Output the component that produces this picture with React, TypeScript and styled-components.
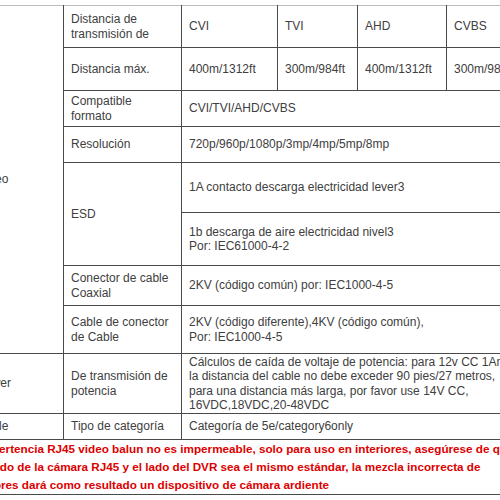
import styled, { createGlobalStyle } from "styled-components"

const GlobalStyle = createGlobalStyle`
    html, body {
        margin: 0;
        padding: 0;
        background: #fff;
    }
    body {
        font-family: "Liberation Sans", Arial, sans-serif;
    }
`

const Page = styled.div`
    width: 500px;
    height: 500px;
    overflow: hidden;
    padding-top: 5px;
    box-sizing: border-box;
`

const SpecTable = styled.table`
    margin-left: -30px;
    width: 560px;
    table-layout: fixed;
    border-collapse: collapse;
    font-size: 12px;
    line-height: 14.4px;
    color: #404040;

    tr:first-child td {
        border-top-color: #bbb;
    }
`

const Col = styled.col<{ $w: number }>`
    width: ${({ $w }) => $w}px;
`

const Row = styled.tr<{ $h: number }>`
    height: ${({ $h }) => $h}px;
`

const Cell = styled.td`
    border: 1px solid #4a4a4a;
    padding: 0 7px;
    vertical-align: middle;
    white-space: nowrap;
    overflow: hidden;
`

const GroupCell = styled(Cell)`
    padding-left: 6px;
`

const Warning = styled.td`
    border: 1px solid #4a4a4a;
    padding: 0 6px;
    color: #dd0000;
    font-size: 11.7px;
    font-weight: bold;
    line-height: 18px;
    white-space: nowrap;
    vertical-align: middle;
`

const widths = [93, 118, 96, 80, 89, 84]

export default function App() {
    return (
        <>
            <GlobalStyle />
            <Page>
                <SpecTable>
                    <colgroup>
                        {widths.map((w, i) => <Col key={i} $w={w} />)}
                    </colgroup>
                    <tbody>
                        <Row $h={42}>
                            <GroupCell rowSpan={8}>Vídeo</GroupCell>
                            <Cell>Distancia de<br />transmisión de</Cell>
                            <Cell>CVI</Cell>
                            <Cell>TVI</Cell>
                            <Cell>AHD</Cell>
                            <Cell>CVBS</Cell>
                        </Row>
                        <Row $h={43}>
                            <Cell>Distancia máx.</Cell>
                            <Cell>400m/1312ft</Cell>
                            <Cell>300m/984ft</Cell>
                            <Cell>400m/1312ft</Cell>
                            <Cell>300m/984ft</Cell>
                        </Row>
                        <Row $h={36}>
                            <Cell>Compatible<br />formato</Cell>
                            <Cell colSpan={4}>CVI/TVI/AHD/CVBS</Cell>
                        </Row>
                        <Row $h={36}>
                            <Cell>Resolución</Cell>
                            <Cell colSpan={4}>720p/960p/1080p/3mp/4mp/5mp/8mp</Cell>
                        </Row>
                        <Row $h={50}>
                            <Cell rowSpan={2}>ESD</Cell>
                            <Cell colSpan={4}>1A contacto descarga electricidad lever3</Cell>
                        </Row>
                        <Row $h={53}>
                            <Cell colSpan={4}>1b descarga de aire electricidad nivel3<br />Por: IEC61000-4-2</Cell>
                        </Row>
                        <Row $h={40}>
                            <Cell>Conector de cable<br />Coaxial</Cell>
                            <Cell colSpan={4}>2KV (código común) por: IEC1000-4-5</Cell>
                        </Row>
                        <Row $h={48}>
                            <Cell>Cable de conector<br />de Cable</Cell>
                            <Cell colSpan={4}>2KV (código diferente),4KV (código común),<br />Por: IEC1000-4-5</Cell>
                        </Row>
                        <Row $h={60}>
                            <GroupCell>Power</GroupCell>
                            <Cell>De transmisión de<br />potencia</Cell>
                            <Cell colSpan={4}>
                                Cálculos de caída de voltaje de potencia: para 12v CC 1Amp,<br />
                                la distancia del cable no debe exceder 90 pies/27 metros,<br />
                                para una distancia más larga, por favor use 14V CC,<br />
                                16VDC,18VDC,20-48VDC
                            </Cell>
                        </Row>
                        <Row $h={26}>
                            <GroupCell>Cable</GroupCell>
                            <Cell>Tipo de categoría</Cell>
                            <Cell colSpan={4}>Categoría de 5e/category6only</Cell>
                        </Row>
                        <Row $h={54}>
                            <Warning colSpan={6}>
                                Advertencia RJ45 video balun no es impermeable, solo para uso en interiores, asegúrese de que<br />
                                el lado de la cámara RJ45 y el lado del DVR sea el mismo estándar, la mezcla incorrecta de<br />
                                colores dará como resultado un dispositivo de cámara ardiente
                            </Warning>
                        </Row>
                    </tbody>
                </SpecTable>
            </Page>
        </>
    )
}
